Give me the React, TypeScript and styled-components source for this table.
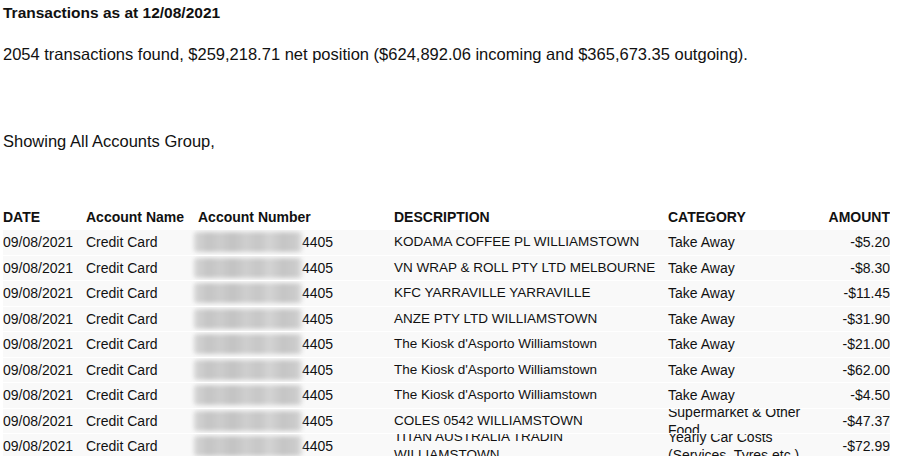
import React from "react";
import styled, { createGlobalStyle } from "styled-components";

const GlobalStyle = createGlobalStyle`
  body {
    margin: 0;
    background: #fff;
    color: #111;
    font-family: "Liberation Sans", Arial, sans-serif;
  }
`;

const Page = styled.div`
  padding: 0 11px 0 3px;
  height: 456px;
  overflow: hidden;
`;

const Title = styled.h1`
  margin: 0;
  padding-top: 4px;
  font-size: 15.5px;
  line-height: 18px;
  font-weight: 700;
`;

const Summary = styled.p`
  margin: 22px 0 0;
  font-size: 16.5px;
  line-height: 20px;
`;

const Showing = styled.p`
  margin: 67px 0 0;
  font-size: 16.5px;
  line-height: 20px;
`;

const Table = styled.div`
  margin-top: 53px;
  width: 887px;
`;

const Row = styled.div<{ $head?: boolean }>`
  display: grid;
  grid-template-columns: 83px 112px 196px 274px 150px 1fr;
  grid-template-rows: 100%;
  height: ${(p) => (p.$head ? "25px" : "24.5px")};
  margin-bottom: 1px;
  background: ${(p) => (p.$head ? "#fff" : "#f9f9f9")};
  font-size: 14px;
  font-weight: ${(p) => (p.$head ? 700 : 400)};
  overflow: hidden;
`;

const Cell = styled.div<{ $right?: boolean; $caps?: boolean }>`
  display: flex;
  align-items: center;
  justify-content: ${(p) => (p.$right ? "flex-end" : "flex-start")};
  padding-right: ${(p) => (p.$right ? "0" : "8px")};
  line-height: 18px;
  text-align: ${(p) => (p.$right ? "right" : "left")};
  font-size: ${(p) => (p.$caps ? "13.5px" : "inherit")};
  min-width: 0;
  min-height: 0;
`;

const Redacted = styled.span`
  display: block;
  flex: none;
  width: 108px;
  height: 20px;
  margin-left: -4px;
  border-radius: 3px;
  background: linear-gradient(
    90deg,
    #d6d6d6 0%,
    #c4c4c4 14%,
    #cdcdcd 24%,
    #c2c2c2 36%,
    #cfcfcf 48%,
    #c6c6c6 60%,
    #d4d4d4 70%,
    #c5c5c5 82%,
    #cbcbcb 94%,
    #dcdcdc 100%
  );
  filter: blur(2px);
`;

type Txn = {
  description: string;
  category: string;
  amount: string;
};

const txns: Txn[] = [
  { description: "KODAMA COFFEE PL WILLIAMSTOWN", category: "Take Away", amount: "-$5.20" },
  { description: "VN WRAP & ROLL PTY LTD MELBOURNE", category: "Take Away", amount: "-$8.30" },
  { description: "KFC YARRAVILLE YARRAVILLE", category: "Take Away", amount: "-$11.45" },
  { description: "ANZE PTY LTD WILLIAMSTOWN", category: "Take Away", amount: "-$31.90" },
  { description: "The Kiosk d'Asporto Williamstown", category: "Take Away", amount: "-$21.00" },
  { description: "The Kiosk d'Asporto Williamstown", category: "Take Away", amount: "-$62.00" },
  { description: "The Kiosk d'Asporto Williamstown", category: "Take Away", amount: "-$4.50" },
  { description: "COLES 0542 WILLIAMSTOWN", category: "Supermarket & Other Food", amount: "-$47.37" },
  {
    description: "TITAN AUSTRALIA TRADIN WILLIAMSTOWN",
    category: "Yearly Car Costs (Services, Tyres etc.)",
    amount: "-$72.99",
  },
];

export default function App() {
  return (
    <>
      <GlobalStyle />
      <Page>
        <Title>Transactions as at 12/08/2021</Title>
        <Summary>
          2054 transactions found, $259,218.71 net position ($624,892.06 incoming and
          $365,673.35 outgoing).
        </Summary>
        <Showing>Showing All Accounts Group,</Showing>

        <Table>
          <Row $head>
            <Cell>DATE</Cell>
            <Cell>Account Name</Cell>
            <Cell>Account Number</Cell>
            <Cell>DESCRIPTION</Cell>
            <Cell>CATEGORY</Cell>
            <Cell $right>AMOUNT</Cell>
          </Row>
          {txns.map((t, i) => (
            <Row key={i}>
              <Cell>09/08/2021</Cell>
              <Cell>Credit Card</Cell>
              <Cell>
                <Redacted />
                4405
              </Cell>
              <Cell $caps>{t.description}</Cell>
              <Cell>{t.category}</Cell>
              <Cell $right>{t.amount}</Cell>
            </Row>
          ))}
        </Table>
      </Page>
    </>
  );
}
